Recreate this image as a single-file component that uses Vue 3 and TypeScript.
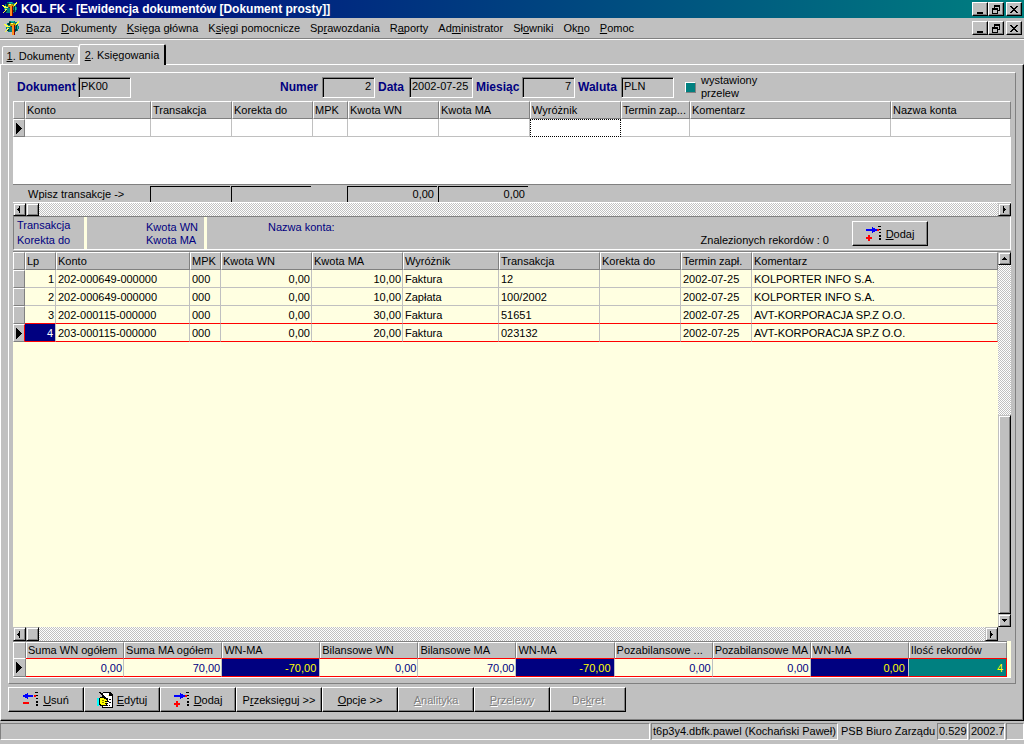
<script setup lang="ts">
import { h, ref } from 'vue'

interface Column {
  title: string
  width?: number
  num?: boolean
}
interface Entry {
  lp: number
  cells: string[]
}
interface Total {
  title: string
  value: string
  tone: 'plain' | 'diff' | 'count'
}
interface Action {
  label: string
  icon?: 'remove' | 'edit' | 'add'
  wide?: boolean
  disabled?: boolean
}

// Renders a caption whose letter after "&" is the underlined access key.
const Caption = (props: { text: string }) => {
  const i = props.text.indexOf('&')
  if (i < 0) return h('span', props.text)
  return h('span', [props.text.slice(0, i), h('u', props.text[i + 1]), props.text.slice(i + 2)])
}
Caption.props = ['text']

const menu: string[] = [
  '&Baza', '&Dokumenty', '&Księga główna', 'K&sięgi pomocnicze', 'Sp&rawozdania',
  'R&aporty', 'Ad&ministrator', 'Sł&owniki', 'Ok&no', '&Pomoc',
]

const tabs: string[] = ['&1. Dokumenty', '&2. Księgowania']
const activeTab = ref(1)

const fields = [
  { id: 'dokument', label: 'Dokument', value: 'PK00', num: false },
  { id: 'numer', label: 'Numer', value: '2', num: true },
  { id: 'data', label: 'Data', value: '2002-07-25', num: false },
  { id: 'miesiac', label: 'Miesiąc', value: '7', num: true },
  { id: 'waluta', label: 'Waluta', value: 'PLN', num: false },
]
const transferIssued = ref(true)

const draftColumns: Column[] = [
  { title: 'Konto', width: 126 },
  { title: 'Transakcja', width: 81 },
  { title: 'Korekta do', width: 81 },
  { title: 'MPK', width: 35 },
  { title: 'Kwota WN', width: 91 },
  { title: 'Kwota MA', width: 91 },
  { title: 'Wyróżnik', width: 91 },
  { title: 'Termin zap...', width: 69 },
  { title: 'Komentarz', width: 201 },
  { title: 'Nazwa konta' },
]
const draftFooter = [
  { text: 'Wpisz transakcje ->', kind: 'note' },
  { text: '', kind: 'box' },
  { text: '', kind: 'box' },
  { text: '', kind: '' },
  { text: '0,00', kind: 'box' },
  { text: '0,00', kind: 'box' },
  { text: '', kind: '' },
  { text: '', kind: '' },
  { text: '', kind: '' },
  { text: '', kind: '' },
]

const entryColumns: Column[] = [
  { title: 'Konto', width: 134 },
  { title: 'MPK', width: 31 },
  { title: 'Kwota WN', width: 91, num: true },
  { title: 'Kwota MA', width: 91, num: true },
  { title: 'Wyróżnik', width: 96 },
  { title: 'Transakcja', width: 101 },
  { title: 'Korekta do', width: 81 },
  { title: 'Termin zapł.', width: 71 },
  { title: 'Komentarz' },
]
const entries: Entry[] = [
  { lp: 1, cells: ['202-000649-000000', '000', '0,00', '10,00', 'Faktura', '12', '', '2002-07-25', 'KOLPORTER INFO S.A.'] },
  { lp: 2, cells: ['202-000649-000000', '000', '0,00', '10,00', 'Zapłata', '100/2002', '', '2002-07-25', 'KOLPORTER INFO S.A.'] },
  { lp: 3, cells: ['202-000115-000000', '000', '0,00', '30,00', 'Faktura', '51651', '', '2002-07-25', 'AVT-KORPORACJA SP.Z O.O.'] },
  { lp: 4, cells: ['203-000115-000000', '000', '0,00', '20,00', 'Faktura', '023132', '', '2002-07-25', 'AVT-KORPORACJA SP.Z O.O.'] },
]
const selected = ref(4)

const totals: Total[] = [
  { title: 'Suma WN ogółem', value: '0,00', tone: 'plain' },
  { title: 'Suma MA ogółem', value: '70,00', tone: 'plain' },
  { title: 'WN-MA', value: '-70,00', tone: 'diff' },
  { title: 'Bilansowe WN', value: '0,00', tone: 'plain' },
  { title: 'Bilansowe MA', value: '70,00', tone: 'plain' },
  { title: 'WN-MA', value: '-70,00', tone: 'diff' },
  { title: 'Pozabilansowe ...', value: '0,00', tone: 'plain' },
  { title: 'Pozabilansowe MA', value: '0,00', tone: 'plain' },
  { title: 'WN-MA', value: '0,00', tone: 'diff' },
  { title: 'Ilość rekordów', value: '4', tone: 'count' },
]

const actions: Action[] = [
  { label: '&Usuń', icon: 'remove' },
  { label: '&Edytuj', icon: 'edit' },
  { label: '&Dodaj', icon: 'add' },
  { label: 'P&rzeksięguj >>', wide: true },
  { label: '&Opcje >>' },
  { label: '&Analityka', disabled: true },
  { label: '&Przelewy', disabled: true },
  { label: 'De&kret', disabled: true },
]

const colStyle = (c: Column) => (c.width ? { width: c.width + 'px' } : {})
</script>

<template>
  <div class="window">
    <svg class="defs" width="0" height="0" aria-hidden="true">
      <symbol id="i-app" viewBox="0 0 16 16">
        <path d="M5 1h6v1h2v1h1v3h1v3h-1v2h-2v1H4v-1H3V9H2V5h1V3h2z" fill="#008080" />
        <path d="M5 2h2v1H5zM4 3h2v2H4zM3 9h2v2H3zM12 5h1v4h-1zM11 9h2v2h-2z" fill="#003838" />
        <path d="M7 1h3v1H7zM3 5h1v3H3zM13 6h1v3h-1z" fill="#20c0a0" />
        <path d="M14 1h1v2h-1v1h-1v1h-1v1h-2V5h1V4h1V3h1V2h1z" fill="#ffff40" />
        <path d="M0 4h2v1h2v1h2v1H4v1h1v1H4v1H3v1H2v1H1v-1h1v-1h1V8h1V7H2V6H1V5H0z" fill="#ffff40" />
        <path d="M6 3h5v1h1v2H6z" fill="#c0a000" />
        <path d="M7 3h2v1H7z" fill="#ffff80" />
        <path d="M8 5h2v10H8z" fill="#ff9020" />
        <path d="M10 5h1v10h-1zM7 6h1v1H7z" fill="#800000" />
      </symbol>
      <symbol id="i-add" viewBox="0 0 16 15">
        <path d="M0 3h6V1h1v1h2v1h2v2H9v1H7v1H6V5H0z" fill="#00f" />
        <path d="M11 3h2v2h-2zM2 9h2v2h2v2H4v2H2v-2H0v-2h2z" fill="#f00" />
        <path d="M12 0h3v1h-3zM13 3h2v1h-2zM13 6h2v1h-2zM13 9h2v2h-2zM13 12h2v2h-2z" fill="#000" />
      </symbol>
      <symbol id="i-remove" viewBox="0 0 16 15">
        <path d="M10 3H5V1H4v1H2v1H0v2h2v1h2v1h1V5h5z" fill="#00f" />
        <path d="M11 3h2v2h-2zM0 10h6v2H0z" fill="#f00" />
        <path d="M12 0h3v1h-3zM13 3h2v1h-2zM13 6h2v1h-2zM13 9h2v2h-2zM13 12h2v2h-2z" fill="#000" />
      </symbol>
      <symbol id="i-edit" viewBox="0 0 16 16">
        <path d="M6 0h7l3 3v13H5V1h1z" fill="#000" />
        <path d="M6 1h6v3h3v11H6z" fill="#fff" />
        <path d="M13 2h1v1h-1zM10 6h1v1h-1zM12 7h2v1h-2zM12 10h2v1h-2zM9 13h2v1H9zM12 13h1v1h-1z" fill="#000" />
        <path d="M3 5h4v1h2v1h2v2h1v1h-2v1h1v1h-1v1H9v1H3v-1H2V6h1z" fill="#000" />
        <path d="M3 6h4v1h2v1h1v1H8v1h2v1H8v1h1v1H4v-1H3z" fill="#ff0" />
        <path d="M5 8h2v1H5zM5 10h2v1H5z" fill="#808000" />
        <path d="M0 6h2v8H0z" fill="#0ff" />
        <path d="M2 0h2v1h1v1h1v1h1v1h1v1h1v1h1v2H9V7H8V6H7V5H6V4H5V3H4V2H3V1H2z" fill="#000" />
        <path d="M11 4l1-2v1l-4 5H7z" fill="#ffff80" />
      </symbol>
      <symbol id="i-min" viewBox="0 0 9 9"><path d="M1 7h6v2H1z" /></symbol>
      <symbol id="i-restore" viewBox="0 0 9 9">
        <path fill-rule="evenodd" d="M2 0h6v6H6v3H0V3h2zM3 2v1h3v2h1V2zM1 5v3h4V5z" />
      </symbol>
      <symbol id="i-close" viewBox="0 0 9 9">
        <path d="M0 1h2v1h1v1h2V2h1V1h2v1H7v1H6v1H5v1h1v1h1v1h1v1H6V7H5V6H3v1H2v1H0V7h1V6h1V5h1V4H2V3H1V2H0z" />
      </symbol>
      <symbol id="i-left" viewBox="0 0 7 7"><path d="M4 0v7H3V5H2V4H1V3h1V2h1V0z" /></symbol>
      <symbol id="i-right" viewBox="0 0 7 7"><path d="M2 0v7h1V5h1V4h1V3H4V2H3V0z" /></symbol>
      <symbol id="i-up" viewBox="0 0 7 7"><path d="M3 2h1v1h1v1h1v1H1V4h1V3h1z" /></symbol>
      <symbol id="i-down" viewBox="0 0 7 7"><path d="M1 2h5v1H5v1H4v1H3V4H2V3H1z" /></symbol>
      <symbol id="i-row" viewBox="0 0 6 11"><path d="M0 0l6 5.5L0 11z" /></symbol>
    </svg>

    <header class="title-bar">
      <svg class="app-icon"><use href="#i-app" /></svg>
      <h1>KOL FK - [Ewidencja dokumentów [Dokument prosty]]</h1>
      <div class="win-buttons">
        <button type="button" aria-label="Minimalizuj"><svg><use href="#i-min" /></svg></button>
        <button type="button" aria-label="Przywróć"><svg><use href="#i-restore" /></svg></button>
        <button type="button" class="close" aria-label="Zamknij"><svg><use href="#i-close" /></svg></button>
      </div>
    </header>

    <nav class="menu-bar">
      <svg class="app-icon"><use href="#i-app" /></svg>
      <div class="menu">
        <button v-for="m in menu" :key="m" type="button" class="menu-item"><Caption :text="m" /></button>
      </div>
      <div class="win-buttons">
        <button type="button" aria-label="Minimalizuj dokument"><svg><use href="#i-min" /></svg></button>
        <button type="button" aria-label="Przywróć dokument"><svg><use href="#i-restore" /></svg></button>
        <button type="button" class="close" aria-label="Zamknij dokument"><svg><use href="#i-close" /></svg></button>
      </div>
    </nav>

    <div class="tabs" role="tablist">
      <button
        v-for="(t, i) in tabs" :key="t" type="button" role="tab" class="tab"
        :class="{ active: i === activeTab }" :aria-selected="i === activeTab" @click="activeTab = i"
      ><Caption :text="t" /></button>
    </div>

    <main class="page">
      <section class="panel">
        <form class="doc-fields" @submit.prevent>
          <div v-for="f in fields" :key="f.id" class="field" :class="f.id">
            <label :for="f.id">{{ f.label }}</label>
            <input :id="f.id" type="text" :class="{ num: f.num }" :value="f.value" readonly />
          </div>
          <label class="flag">
            <input v-model="transferIssued" type="checkbox" />
            <span>wystawiony<br />przelew</span>
          </label>
        </form>

        <div class="draft">
          <table class="grid">
            <colgroup>
              <col class="sel-col" />
              <col v-for="c in draftColumns" :key="c.title" :style="colStyle(c)" />
            </colgroup>
            <thead>
              <tr>
                <th></th>
                <th v-for="c in draftColumns" :key="c.title" scope="col">{{ c.title }}</th>
              </tr>
            </thead>
            <tbody>
              <tr>
                <td class="sel"><svg class="row-mark"><use href="#i-row" /></svg></td>
                <td v-for="c in draftColumns" :key="c.title" :class="{ focus: c.title === 'Wyróżnik' }"></td>
              </tr>
            </tbody>
          </table>
        </div>
        <table class="grid draft-foot">
          <colgroup>
            <col class="sel-col" />
            <col v-for="c in draftColumns" :key="c.title" :style="colStyle(c)" />
          </colgroup>
          <tbody>
            <tr>
              <td></td>
              <td v-for="(f, i) in draftFooter" :key="i"><div :class="f.kind">{{ f.text }}</div></td>
            </tr>
          </tbody>
        </table>
        <div class="hscroll">
          <button type="button" class="sb" aria-label="W lewo"><svg><use href="#i-left" /></svg></button>
          <span class="thumb"></span>
          <button type="button" class="sb end" aria-label="W prawo"><svg><use href="#i-right" /></svg></button>
        </div>

        <div class="info">
          <div class="info-a"><span>Transakcja</span><span>Korekta do</span></div>
          <div class="info-b"><span>Kwota WN</span><span>Kwota MA</span></div>
          <div class="info-c">Nazwa konta:</div>
          <div class="found">Znalezionych rekordów : 0</div>
          <button type="button" class="btn">
            <svg class="ico"><use href="#i-add" /></svg><Caption text="&Dodaj" />
          </button>
        </div>

        <div class="entries">
          <div class="entries-view">
            <table class="grid list">
              <colgroup>
                <col class="sel-col" />
                <col class="lp-col" />
                <col v-for="c in entryColumns" :key="c.title" :style="colStyle(c)" />
              </colgroup>
              <thead>
                <tr>
                  <th></th>
                  <th scope="col">Lp</th>
                  <th v-for="c in entryColumns" :key="c.title" scope="col">{{ c.title }}</th>
                </tr>
              </thead>
              <tbody>
                <tr
                  v-for="e in entries" :key="e.lp"
                  :class="{ current: e.lp === selected, before: e.lp === selected - 1 }" @click="selected = e.lp"
                >
                  <td class="sel"><svg v-if="e.lp === selected" class="row-mark"><use href="#i-row" /></svg></td>
                  <td class="lp num">{{ e.lp }}</td>
                  <td v-for="(v, i) in e.cells" :key="i" :class="{ num: entryColumns[i].num }">{{ v }}</td>
                </tr>
              </tbody>
            </table>
          </div>
          <div class="vscroll">
            <button type="button" class="sb" aria-label="W górę"><svg><use href="#i-up" /></svg></button>
            <span class="vspace"></span>
            <span class="vthumb"></span>
            <button type="button" class="sb" aria-label="W dół"><svg><use href="#i-down" /></svg></button>
          </div>
        </div>
        <div class="hscroll second">
          <button type="button" class="sb" aria-label="Lista w lewo"><svg><use href="#i-left" /></svg></button>
          <span class="thumb"></span>
          <button type="button" class="sb end" aria-label="Lista w prawo"><svg><use href="#i-right" /></svg></button>
          <span class="corner"></span>
        </div>

        <div class="totals">
          <table class="grid sums">
            <colgroup><col class="sum-sel-col" /></colgroup>
            <thead>
              <tr>
                <th></th>
                <th v-for="(t, i) in totals" :key="i" scope="col">{{ t.title }}</th>
              </tr>
            </thead>
            <tbody>
              <tr>
                <td class="sel"><svg class="row-mark"><use href="#i-row" /></svg></td>
                <td v-for="(t, i) in totals" :key="i" class="num" :class="t.tone">{{ t.value }}</td>
              </tr>
            </tbody>
          </table>
        </div>
      </section>

      <div class="actions">
        <button
          v-for="a in actions" :key="a.label" type="button" class="btn"
          :class="{ wide: a.wide }" :disabled="a.disabled"
        >
          <svg v-if="a.icon" class="ico" :class="a.icon"><use :href="'#i-' + a.icon" /></svg><Caption :text="a.label" />
        </button>
      </div>
    </main>

    <footer class="status">
      <span class="cell grow"></span>
      <span class="cell user">t6p3y4.dbfk.pawel (Kochański Paweł)</span>
      <span class="cell firm">PSB Biuro Zarządu</span>
      <span class="cell ver">0.529</span>
      <span class="cell period">2002.7</span>
      <span class="cell last"></span>
    </footer>
  </div>
</template>

<style>
body {
  margin: 0;
  background: #c0c0c0;
}
u {
  text-underline-offset: 1px;
}
</style>

<style scoped>
.window {
  display: flex;
  flex-direction: column;
  box-sizing: border-box;
  min-height: 100vh;
  background: #c0c0c0;
  color: #000;
  font: 11px/14px "Liberation Sans", Arial, sans-serif;
}
.window *, .window *::before {
  box-sizing: border-box;
}
button, input {
  margin: 0;
  padding: 0;
  border: 0;
  border-radius: 0;
  background: #c0c0c0;
  color: inherit;
  font: inherit;
}
svg {
  display: block;
  flex: none;
  shape-rendering: crispEdges;
}
.defs {
  position: absolute;
}
.app-icon {
  width: 16px;
  height: 16px;
}

/* title and menu */
.title-bar {
  display: flex;
  align-items: center;
  height: 18px;
  padding: 0 2px;
  background: linear-gradient(to right, #000080, #008080);
  color: #fff;
}
h1 {
  margin: 0 0 0 3px;
  font-size: 12px;
  line-height: 16px;
  font-weight: bold;
  white-space: nowrap;
}
.win-buttons {
  display: flex;
  margin-left: auto;
}
.win-buttons button {
  display: flex;
  justify-content: center;
  width: 16px;
  height: 14px;
  padding-top: 2px;
  border: 1px solid;
  border-color: #fff #000 #000 #fff;
  box-shadow: inset -1px -1px #808080;
}
.win-buttons .close {
  margin-left: 2px;
}
.win-buttons svg {
  width: 9px;
  height: 9px;
}
.menu-bar {
  display: flex;
  align-items: center;
  height: 21px;
  padding: 0 2px 0 4px;
  border-bottom: 1px solid #808080;
}
.menu {
  display: flex;
  gap: 10px;
  padding-left: 6px;
}
.menu-item {
  line-height: 18px;
  white-space: nowrap;
}

/* tabs */
.tabs {
  display: flex;
  align-items: flex-end;
  height: 25px;
  padding-left: 2px;
  border-top: 1px solid #fff;
}
.tab {
  height: 18px;
  width: 77px;
  border: 1px solid #fff;
  border-bottom: 0;
  border-radius: 2px 2px 0 0;
  line-height: 16px;
}
.tab.active {
  width: 87px;
  height: 21px;
  margin-bottom: -1px;
  border-right: 2px solid #000;
  line-height: 18px;
  position: relative;
}

/* page */
.page {
  display: flex;
  flex-direction: column;
  flex: 1;
  padding: 7px 7px 8px;
  border: 1px solid;
  border-color: #fff #000 #000 #fff;
  box-shadow: inset -1px -1px #808080;
}
.panel {
  display: flex;
  flex-direction: column;
  flex: 1;
  padding: 0 4px 5px;
  border: 1px solid;
  border-color: #fff #808080 #808080 #fff;
}

.doc-fields {
  display: flex;
  align-items: center;
  gap: 3px;
  height: 28px;
  padding: 0 4px;
}
.field {
  display: flex;
  align-items: center;
}
.field label {
  color: #000080;
  font-size: 12px;
  font-weight: bold;
}
.field input {
  width: 53px;
  height: 21px;
  padding: 0 3px 2px 2px;
  border: 1px solid;
  border-color: #808080 #fff #fff #808080;
  box-shadow: inset 1px 1px #000;
}
.field input.num {
  text-align: right;
}
.dokument label { width: 61px; }
.numer { margin-left: 146px; }
.numer label { width: 42px; }
.data label { width: 31px; }
.field.data input { width: 64px; }
.miesiac label { width: 46px; }
.waluta label { width: 43px; }
.flag {
  display: flex;
  align-items: center;
  gap: 5px;
  margin-left: 8px;
  line-height: 13px;
}
.flag input {
  appearance: none;
  width: 11px;
  height: 11px;
  border: 1px solid;
  border-color: #fff #808080 #808080 #fff;
}
.flag input:checked {
  background: #008080;
}

/* grids */
.grid {
  width: 100%;
  table-layout: fixed;
  border-collapse: separate;
  border-spacing: 0;
}
.sel-col { width: 12px; }
.lp-col { width: 31px; }
.sum-sel-col { width: 13px; }
.grid th {
  height: 18px;
  padding: 0 0 0 1px;
  border: 1px solid;
  border-color: #fff #808080 #808080 #fff;
  background: #c0c0c0;
  font-weight: normal;
  line-height: 14px;
  text-align: left;
  white-space: nowrap;
  overflow: hidden;
}
.grid td {
  height: 18px;
  padding: 0 0 0 2px;
  border-right: 1px solid #c0c0c0;
  border-bottom: 1px solid #c0c0c0;
  line-height: 14px;
  white-space: nowrap;
  overflow: hidden;
}
.grid td.num {
  padding: 0 1px 0 0;
  text-align: right;
}
.grid td.sel {
  padding: 0 0 0 2px;
  border: 1px solid;
  border-color: #fff #808080 #808080 #fff;
  background: #c0c0c0;
}
.row-mark {
  width: 6px;
  height: 11px;
}
.draft {
  height: 83px;
  background: #fff;
}
.grid td.focus {
  border: 1px dotted #000;
}
.draft-foot {
  border-top: 1px solid #808080;
}
.draft-foot td {
  height: 17px;
  padding: 0;
  border: 0;
  overflow: visible;
}
.draft-foot .note {
  padding-left: 3px;
}
.draft-foot .box {
  height: 16px;
  margin-left: -1px;
  margin-right: 2px;
  padding-right: 3px;
  border-top: 1px solid #000;
  border-left: 1px solid #000;
  text-align: right;
}

/* scroll bars */
.hscroll, .vscroll {
  display: flex;
  background: repeating-conic-gradient(#fff 0 25%, #c0c0c0 0 50%) 0 0 / 2px 2px;
}
.hscroll {
  height: 14px;
  border-top: 1px solid #fff;
}
.hscroll.second {
  border-top: 0;
}
.sb, .thumb, .vthumb {
  border: 1px solid;
  border-color: #c0c0c0 #000 #000 #c0c0c0;
  background: #c0c0c0;
  box-shadow: inset 1px 1px #fff, inset -1px -1px #808080;
}
.sb {
  display: flex;
  align-items: center;
  justify-content: center;
  width: 13px;
}
.sb svg {
  width: 7px;
  height: 7px;
}
.thumb {
  width: 13px;
}
.sb.end {
  margin-left: auto;
}
.corner {
  width: 13px;
  background: #c0c0c0;
}
.vscroll {
  flex-direction: column;
  width: 13px;
}
.vscroll .sb {
  height: 13px;
}
.vspace {
  flex: 151;
}
.vthumb {
  flex: 198;
}

/* info strip */
.info {
  display: flex;
  height: 34px;
  border: 1px solid;
  border-color: #808080 #fff #fff #808080;
  color: #000080;
}
.info-a, .info-b {
  display: flex;
  flex-direction: column;
  border-right: 3px solid #ffffe1;
}
.info-a {
  width: 73px;
  padding: 1px 0 0 3px;
  line-height: 15px;
}
.info-b {
  width: 120px;
  padding: 4px 0 0 59px;
  line-height: 13px;
}
.info-c {
  padding: 3px 0 0 61px;
}
.found {
  margin-left: auto;
  padding: 16px 23px 0 0;
  color: #000;
}
.info .btn {
  margin: 4px 82px 0 0;
}

.btn {
  display: flex;
  align-items: center;
  justify-content: center;
  gap: 4px;
  width: 76px;
  height: 25px;
  border: 1px solid;
  border-color: #fff #000 #000 #fff;
  box-shadow: inset -1px -1px #808080;
  color: #000;
  white-space: nowrap;
}
.btn.wide {
  width: 86px;
}
.btn:disabled {
  color: #808080;
  text-shadow: 1px 1px #fff;
}
.ico {
  width: 16px;
  height: 15px;
}
.ico.edit {
  height: 16px;
}

/* entries list */
.entries {
  display: flex;
  flex: 1;
  margin-top: 1px;
  border-top: 1px solid #808080;
}
.entries-view {
  flex: 1;
  min-width: 0;
  background: #ffffe1;
}
.list .current td {
  border-bottom-color: #f00;
}
.list .before td:not(.sel) {
  border-bottom-color: #f00;
}
.list .current .sel {
  border-color: #fff #f00 #808080 #fff;
}
.list .current .lp {
  padding-right: 2px;
  background: #000080;
  color: #fff;
}

/* totals */
.totals {
  padding-right: 4px;
  border-bottom: 1px solid #fff;
  background: #ffffe1;
}
.sums {
  border-top: 1px solid #808080;
}
.sums th {
  height: 16px;
  border-bottom: 0;
  line-height: 13px;
}
.sums td {
  height: 19px;
}
.sums td.num {
  border-top: 1px solid #f00;
  border-bottom: 1px solid #f00;
  background: #ffffe1;
  color: #000080;
}
.sums td.num:last-child {
  border-right-color: #f00;
}
.sums td.diff, .sums td.count {
  padding-right: 3px;
  color: #ff0;
}
.sums td.diff {
  background: #000080;
}
.sums td.count {
  background: #008080;
}

.actions {
  display: flex;
  margin-top: 3px;
}

/* status bar */
.status {
  display: flex;
  gap: 1px;
  height: 23px;
  padding: 2px 0 4px;
}
.cell {
  border: 1px solid;
  border-color: #808080 #fff #fff #808080;
  padding-left: 1px;
  line-height: 15px;
  white-space: nowrap;
  overflow: hidden;
}
.cell.grow { flex: 1; }
.cell.user { width: 187px; }
.cell.firm { width: 97px; border-color: transparent; }
.cell.ver { width: 31px; }
.cell.period { width: 36px; }
.cell.last { width: 18px; }
</style>
